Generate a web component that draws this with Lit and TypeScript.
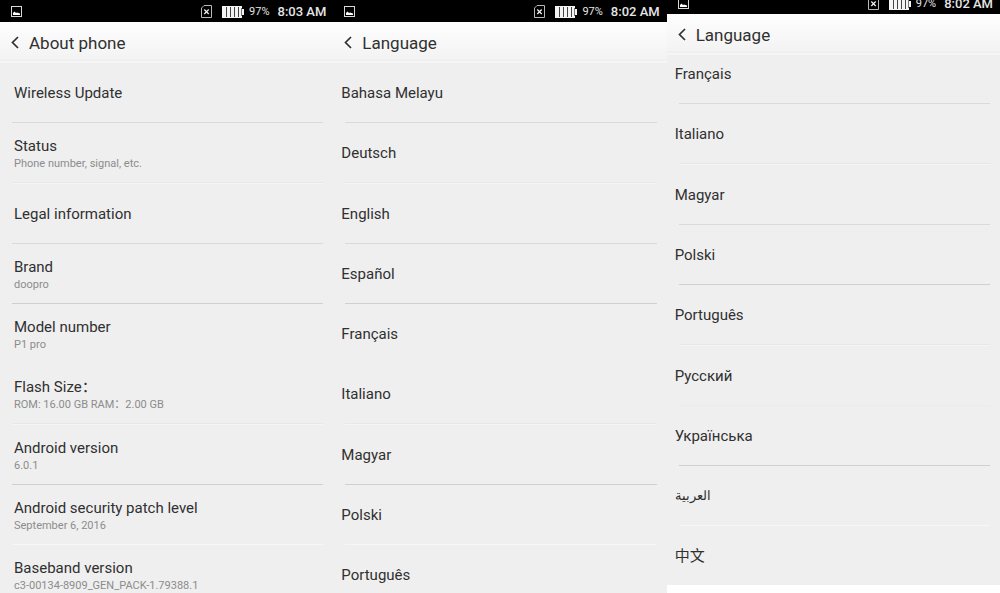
import { LitElement, html, css, svg, nothing } from "lit";
import { customElement, property } from "lit/decorators.js";
import { classMap } from "lit/directives/class-map.js";

type Rule = "strong" | "mid" | "faint" | "none" | "double" | "light";

interface Row {
  title: string;
  note?: string;
  rule: Rule;
  lang?: string;
}

const about: Row[] = [
  { title: "Wireless Update", rule: "mid" },
  { title: "Status", note: "Phone number, signal, etc.", rule: "double" },
  { title: "Legal information", rule: "mid" },
  { title: "Brand", note: "doopro", rule: "strong" },
  { title: "Model number", note: "P1 pro", rule: "none" },
  { title: "Flash Size：", note: "ROM: 16.00 GB RAM：2.00 GB", rule: "double" },
  { title: "Android version", note: "6.0.1", rule: "strong" },
  { title: "Android security patch level", note: "September 6, 2016", rule: "light" },
  { title: "Baseband version", note: "c3-00134-8909_GEN_PACK-1.79388.1", rule: "none" },
];

const languages: Row[] = [
  { title: "Bahasa Melayu", rule: "mid", lang: "ms" },
  { title: "Deutsch", rule: "double", lang: "de" },
  { title: "English", rule: "mid", lang: "en" },
  { title: "Español", rule: "strong", lang: "es" },
  { title: "Français", rule: "none", lang: "fr" },
  { title: "Italiano", rule: "double", lang: "it" },
  { title: "Magyar", rule: "strong", lang: "hu" },
  { title: "Polski", rule: "light", lang: "pl" },
  { title: "Português", rule: "none", lang: "pt" },
];

const moreLanguages: Row[] = [
  { title: "Français", rule: "mid", lang: "fr" },
  { title: "Italiano", rule: "double", lang: "it" },
  { title: "Magyar", rule: "mid", lang: "hu" },
  { title: "Polski", rule: "strong", lang: "pl" },
  { title: "Português", rule: "double", lang: "pt" },
  { title: "Русский", rule: "faint", lang: "ru" },
  { title: "Українська", rule: "strong", lang: "uk" },
  { title: "العربية", rule: "light", lang: "ar" },
  { title: "中文", rule: "none", lang: "zh" },
];

const pictureIcon = svg`
  <rect x="0.5" y="0.5" width="10" height="10" fill="none" stroke="#d8d8d8"/>
  <path d="M2 9V7L3.5 5.5L5 7L6 6.5L9 7.5V9Z" fill="#fff"/>`;

const simIcon = svg`
  <path d="M3 .5H10.500V12.500H.5V3Z" fill="none" stroke="#b8b8b8"/>
  <path d="M3.300 4.500L7.700 9M7.700 4.500L3.300 9" fill="none" stroke="#f4f4f4" stroke-width="1.200"/>`;

const batteryIcon = svg`
  <path d="M0 0H20V3H22V9H20V12H0Z" fill="#f4f4f4"/>
  <path d="M4.500 1V11M8.500 1V11M12.500 1V11M16.500 1V11" stroke="#444"/>
  <path d="M19.500 2V10" stroke="#777"/>`;

@customElement("phone-screen")
export class PhoneScreen extends LitElement {
  @property() heading = "";
  @property() time = "";
  @property({ attribute: false }) rows: Row[] = [];
  @property({ type: Boolean, reflect: true }) scrolled = false;
  @property({ type: Boolean, reflect: true }) wide = false;

  static styles = css`
    :host {
      display: flex;
      flex-direction: column;
      min-width: 0;
      min-height: 0;
      overflow: hidden;
      background: #efefef;
      color: #303030;
      font-family: Roboto, "Noto Sans CJK SC", "Noto Sans", sans-serif;
    }
    :host([scrolled]) {
      margin-bottom: 8px;
    }
    .status {
      flex: none;
      height: 22px;
      box-sizing: border-box;
      padding: 1px 7px 0 11px;
      display: flex;
      align-items: center;
      background: #000;
      color: #e6e6e6;
      white-space: nowrap;
    }
    :host([scrolled]) .status {
      margin-top: -8px;
    }
    .status svg {
      display: block;
      flex: none;
    }
    .sim {
      margin-left: auto;
      margin-right: 10px;
    }
    .charge {
      margin: 0 8px 0 5px;
      font-size: 11px;
    }
    .clock {
      font-size: 13px;
      font-weight: 500;
    }
    .bar {
      flex: none;
      height: 41px;
      box-sizing: border-box;
      display: flex;
      align-items: center;
      gap: 10px;
      padding: 0 11px;
      background: linear-gradient(#fefefe, #f3f3f3 37px, #ebebeb 38px, #f5f5f5 39px);
    }
    .back {
      flex: none;
      padding: 0;
      border: 0;
      background: none;
      color: #303030;
      line-height: 0;
      cursor: pointer;
    }
    .heading {
      margin: 0;
      font-size: 17px;
      font-weight: 400;
      line-height: 22px;
    }
    .view {
      flex: 1;
      min-height: 0;
      overflow: hidden;
    }
    .list {
      margin: 0;
      padding: 0;
      list-style: none;
    }
    :host([scrolled]) .list {
      margin-top: -11px;
    }
    .row {
      width: 100%;
      height: 59px;
      box-sizing: border-box;
      display: flex;
      flex-direction: column;
      justify-content: center;
      padding: 0 8px;
      border: 0;
      background: none;
      color: inherit;
      font: inherit;
      text-align: left;
      white-space: nowrap;
      cursor: pointer;
    }
    :host([wide]) .row {
      padding-left: 14px;
    }
    .noted {
      padding-top: 2px;
    }
    .title {
      font-size: 15px;
      line-height: 20px;
    }
    .title:lang(ar) {
      font-size: 13px;
    }
    .note {
      font-size: 11px;
      line-height: 15px;
      color: #8c8c8c;
    }
    .rule {
      height: 1px;
      margin: 0 10px 0 12px;
    }
    .mid {
      background: #dadada;
    }
    .strong {
      background: #d0d0d0;
    }
    .faint {
      background: #ebebeb;
    }
    .light {
      background: #f7f7f7;
    }
    .double {
      height: 2px;
      background: linear-gradient(#e7e7e7 50%, #f5f5f5 50%);
    }
  `;

  render() {
    return html`
      <div class="status">
        <svg width="11" height="11" aria-hidden="true">${pictureIcon}</svg>
        <svg class="sim" width="11" height="13" aria-hidden="true">${simIcon}</svg>
        <svg width="22" height="12" aria-hidden="true">${batteryIcon}</svg>
        <span class="charge">97%</span>
        <span class="clock">${this.time}</span>
      </div>
      <header class="bar">
        <button class="back" aria-label="Back">
          <svg width="8" height="13" aria-hidden="true">
            <path d="M7 1L1.500 6.500L7 12" fill="none" stroke="currentColor" stroke-width="1.700" />
          </svg>
        </button>
        <h1 class="heading">${this.heading}</h1>
      </header>
      <div class="view">
        <ul class="list">
          ${this.rows.map(
            (row) => html`<li>
              <button class=${classMap({ row: true, noted: !!row.note })}>
                <span class="title" lang=${row.lang ?? "en"}>${row.title}</span>
                ${row.note ? html`<span class="note">${row.note}</span>` : nothing}
              </button>
              <div class=${classMap({ rule: true, [row.rule]: true })}></div>
            </li>`
          )}
        </ul>
      </div>
    `;
  }
}

@customElement("app-root")
export class AppRoot extends LitElement {
  static styles = css`
    :host {
      display: grid;
      grid-template-columns: repeat(3, minmax(0, 1fr));
      grid-template-rows: minmax(0, 1fr);
      height: 100vh;
      overflow: hidden;
      background: #fff;
    }
  `;

  render() {
    return html`
      <phone-screen wide heading="About phone" time="8:03 AM" .rows=${about}></phone-screen>
      <phone-screen heading="Language" time="8:02 AM" .rows=${languages}></phone-screen>
      <phone-screen scrolled heading="Language" time="8:02 AM" .rows=${moreLanguages}></phone-screen>
    `;
  }
}
